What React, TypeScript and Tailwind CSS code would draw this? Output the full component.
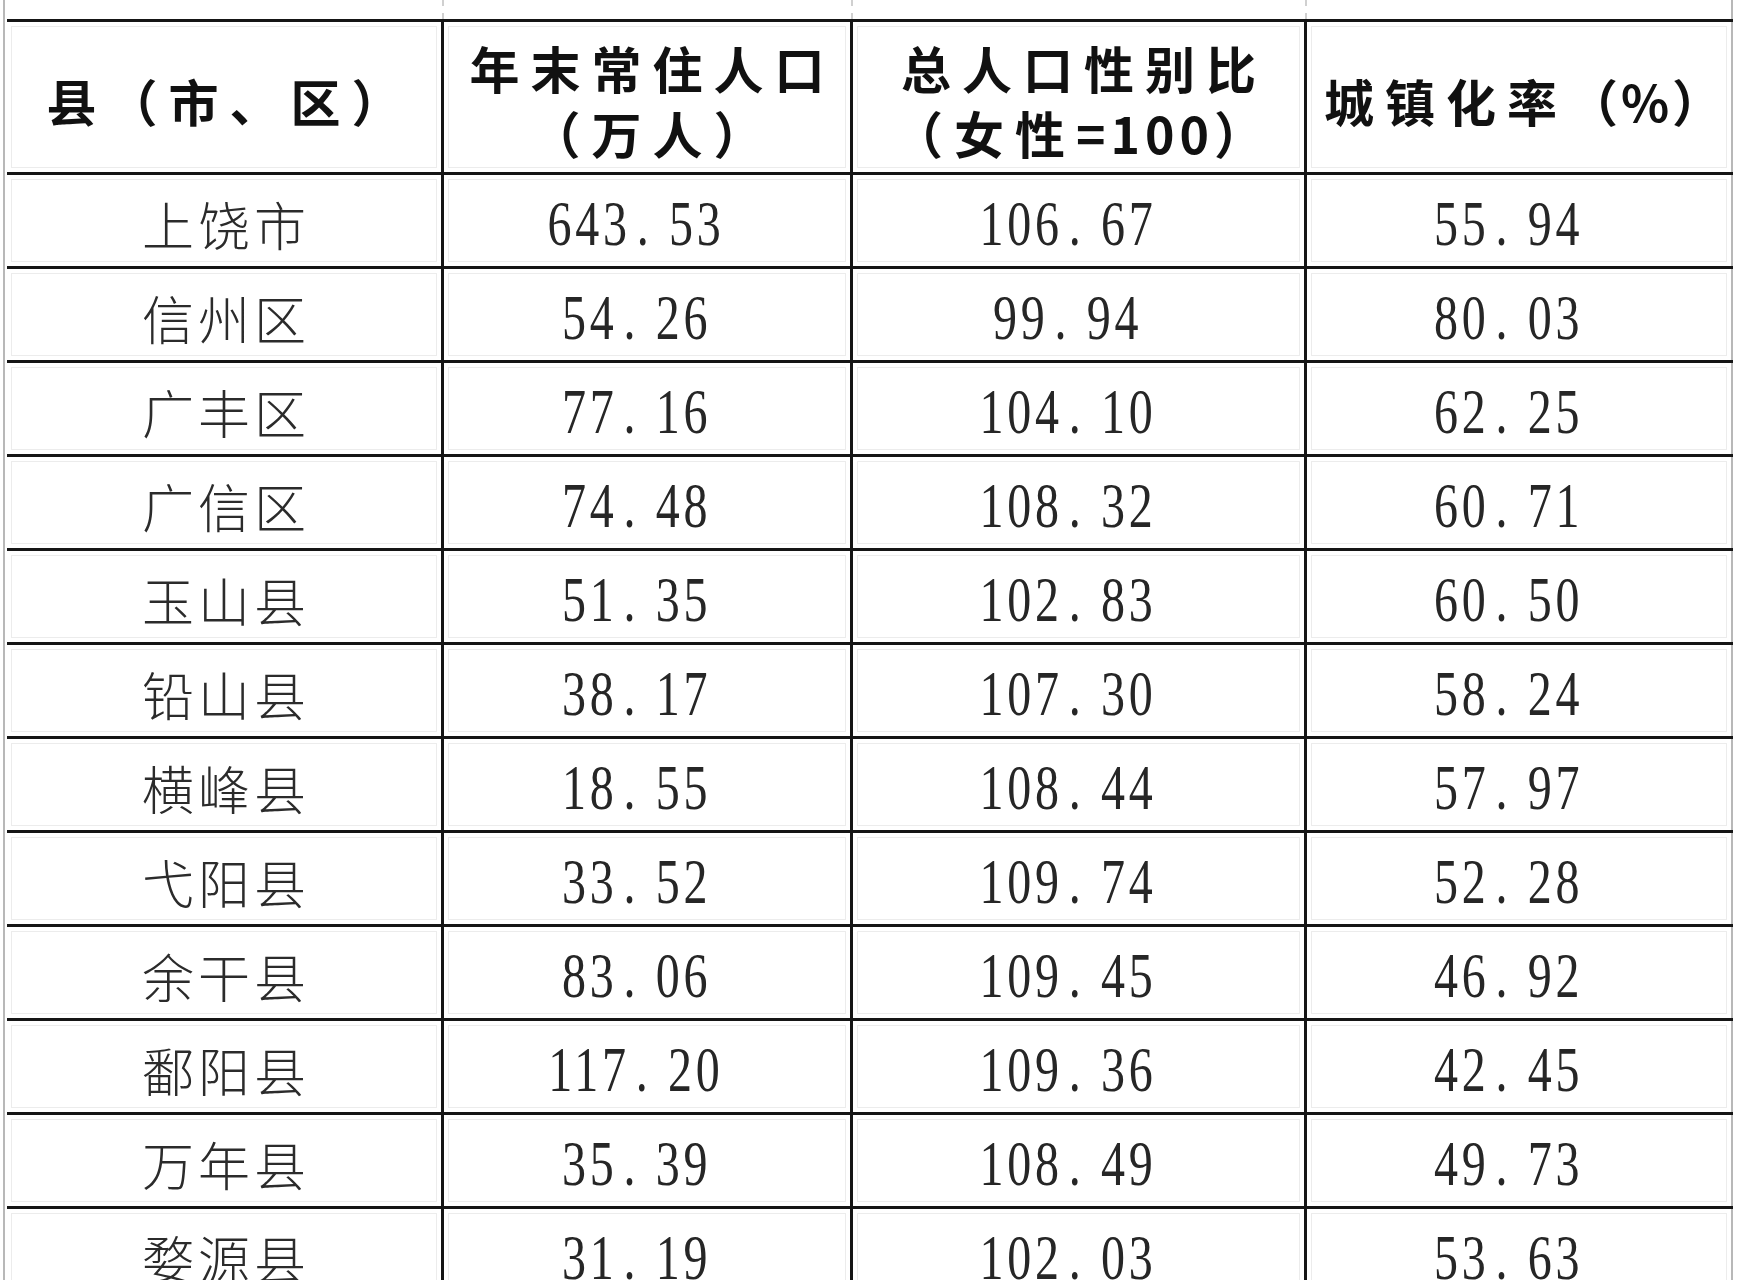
import React from "react";

const rows: [string, string, string, string][] = [
  ["上饶市", "643.53", "106.67", "55.94"],
  ["信州区", "54.26", "99.94", "80.03"],
  ["广丰区", "77.16", "104.10", "62.25"],
  ["广信区", "74.48", "108.32", "60.71"],
  ["玉山县", "51.35", "102.83", "60.50"],
  ["铅山县", "38.17", "107.30", "58.24"],
  ["横峰县", "18.55", "108.44", "57.97"],
  ["弋阳县", "33.52", "109.74", "52.28"],
  ["余干县", "83.06", "109.45", "46.92"],
  ["鄱阳县", "117.20", "109.36", "42.45"],
  ["万年县", "35.39", "108.49", "49.73"],
  ["婺源县", "31.19", "102.03", "53.63"],
];

function Num({ v }: { v: string }) {
  const [a, b] = v.split(".");
  return (
    <span className="inline-block mr-[22px] scale-x-[0.75] font-['Liberation_Serif','Times_New_Roman',serif] text-[64px] leading-none tracking-[5px] text-[#262626]">
      {a}
      <span className="ml-[8px] mr-[22px]">.</span>
      {b}
    </span>
  );
}

function Cell({
  children,
  last,
  h,
}: {
  children?: React.ReactNode;
  last?: boolean;
  h: string;
}) {
  return (
    <div
      className={
        (last ? "border-r-2 border-[#b8b8b8] " : "border-r-[3px] border-[#151515] ") +
        "p-[4px] " +
        h
      }
    >
      <div className="flex h-full items-center justify-center border border-[#ececec]">
        {children}
      </div>
    </div>
  );
}

export default function App() {
  const cols = "grid grid-cols-[437px_409px_454px_426px]";
  const head =
    "whitespace-nowrap font-['Noto_Sans_CJK_SC',sans-serif] font-bold text-[50px] leading-[65px] tracking-[11px] pl-[11px] text-center text-[#111] pt-[6px]";
  const cn =
    "font-['Noto_Sans_CJK_SC',sans-serif] font-light text-[52px] leading-none tracking-[4px] pl-[4px] pt-[6px] text-[#2b2b2b]";
  return (
    <div className="h-[1280px] w-[1753px] overflow-hidden bg-white pl-[3px]">
      <div className="h-full w-[1730px] border-l-2 border-[#b8b8b8] pl-[2px]">
        {/* remnant of previous row */}
        <div className={cols + " h-[19px]"}>
          <div className="border-r-2 border-dashed border-[#d0d0d0]" />
          <div className="border-r-2 border-dashed border-[#d0d0d0]" />
          <div className="border-r-2 border-dashed border-[#d0d0d0]" />
          <div className="border-r-2 border-[#b8b8b8]" />
        </div>
        {/* header */}
        <div className={cols + " border-y-[3px] border-[#151515]"}>
          <Cell h="h-[150px]">
            <div className={head}>县（市、区）</div>
          </Cell>
          <Cell h="h-[150px]">
            <div className={head}>
              年末常住人口
              <br />
              （万人）
            </div>
          </Cell>
          <Cell h="h-[150px]">
            <div className={head}>
              总人口性别比
              <br />
              （女性<span className="tracking-[5px]">=100</span>）
            </div>
          </Cell>
          <Cell h="h-[150px]" last>
            <div className={head}>
              城镇化率<span className="tracking-[3px]">（%）</span>
            </div>
          </Cell>
        </div>
        {rows.map((r) => (
          <div key={r[0]} className={cols + " border-b-[3px] border-[#151515]"}>
            <Cell h="h-[91px]">
              <div className={cn}>{r[0]}</div>
            </Cell>
            <Cell h="h-[91px]">
              <div className="pt-[6px]">
                <Num v={r[1]} />
              </div>
            </Cell>
            <Cell h="h-[91px]">
              <div className="pt-[6px]">
                <Num v={r[2]} />
              </div>
            </Cell>
            <Cell h="h-[91px]" last>
              <div className="pt-[6px]">
                <Num v={r[3]} />
              </div>
            </Cell>
          </div>
        ))}
      </div>
    </div>
  );
}
